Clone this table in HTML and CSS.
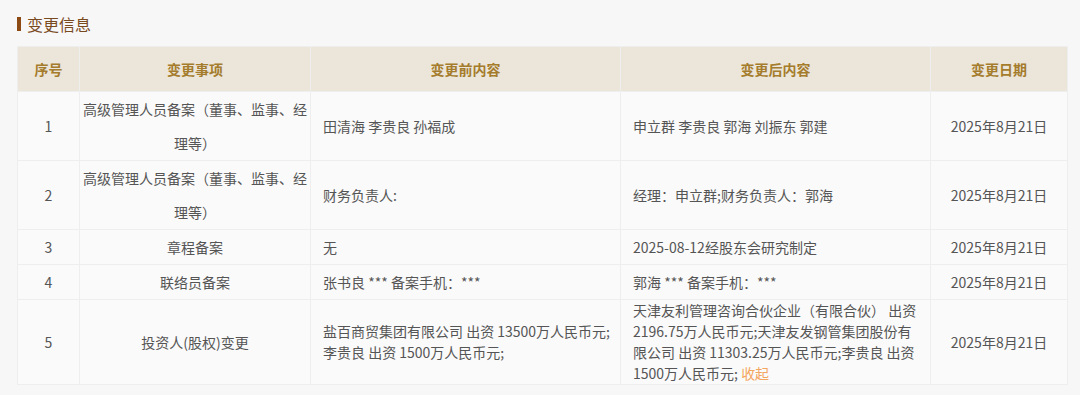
FILE: index.html
```html
<!DOCTYPE html>
<html lang="zh-CN">
<head>
<meta charset="utf-8">
<title>变更信息</title>
<link rel="stylesheet" href="styles.css">
</head>
<body>
<section class="panel">
  <h2 class="title"><span class="bar"></span>变更信息</h2>
  <table class="grid">
    <colgroup>
      <col class="c-no"><col class="c-item"><col class="c-before"><col class="c-after"><col class="c-date">
    </colgroup>
    <thead>
      <tr><th>序号</th><th>变更事项</th><th>变更前内容</th><th>变更后内容</th><th>变更日期</th></tr>
    </thead>
    <tbody>
      <tr>
        <td class="center">1</td>
        <td class="center">高级管理人员备案（董事、监事、经理等）</td>
        <td class="text">田清海 李贵良 孙福成</td>
        <td class="text">申立群 李贵良 郭海 刘振东 郭建</td>
        <td class="center">2025年8月21日</td>
      </tr>
      <tr>
        <td class="center">2</td>
        <td class="center">高级管理人员备案（董事、监事、经理等）</td>
        <td class="text">财务负责人:</td>
        <td class="text">经理：申立群;财务负责人：郭海</td>
        <td class="center">2025年8月21日</td>
      </tr>
      <tr>
        <td class="center">3</td>
        <td class="center">章程备案</td>
        <td class="text">无</td>
        <td class="text">2025-08-12经股东会研究制定</td>
        <td class="center">2025年8月21日</td>
      </tr>
      <tr>
        <td class="center">4</td>
        <td class="center">联络员备案</td>
        <td class="text">张书良 *** 备案手机：***</td>
        <td class="text">郭海 *** 备案手机：***</td>
        <td class="center">2025年8月21日</td>
      </tr>
      <tr>
        <td class="center">5</td>
        <td class="center">投资人(股权)变更</td>
        <td class="text"><div class="multi"><span class="nowrap">盐百商贸集团有限公司 出资 13500万人民币元;</span><br>李贵良 出资 1500万人民币元;</div></td>
        <td class="text"><div class="multi"><span>天津友利管理咨询合伙企业（有限合伙） 出资 2196.75万人民币元;天津友发钢管集团股份有限公司 出资 11303.25万人民币元;李贵良 出资</span> <span>1500万人民币元;</span> <a class="toggle">收起</a></div></td>
        <td class="center">2025年8月21日</td>
      </tr>
    </tbody>
  </table>
</section>
</body>
</html>
```

FILE: styles.css
```css
html, body {
  margin: 0;
  padding: 0;
  background: #f7f7f7;
}

body {
  font-family: "Noto Sans CJK SC", "Microsoft YaHei", "Noto Sans", sans-serif;
  color: #555555;
  font-size: 14px;
}

.panel {
  padding: 12px 13px 0 17px;
}

.title {
  display: flex;
  align-items: center;
  gap: 6px;
  margin: 0;
  height: 24px;
  line-height: 24px;
  font-size: 16px;
  font-weight: normal;
  color: #7a4a1f;
}

.bar {
  display: inline-block;
  width: 4px;
  height: 14px;
  background: #8b4a14;
}

.grid {
  margin-top: 10px;
  width: 1050px;
  border-collapse: collapse;
  table-layout: fixed;
  background: #fafafa;
}

.c-no { width: 62px; }
.c-item { width: 231px; }
.c-before { width: 310px; }
.c-after { width: 310px; }
.c-date { width: 137px; }

.grid th,
.grid td {
  border: 1px solid #eeeeee;
  vertical-align: middle;
}

.grid th {
  height: 44px;
  padding: 0;
  background: #ece5da;
  color: #a47c2c;
  font-weight: bold;
  font-size: 14px;
  text-align: center;
}

.grid td {
  line-height: 34px;
  padding: 0 3px;
}

.grid td.center {
  text-align: center;
}

.grid td.text {
  text-align: left;
  padding: 0 12px;
}

.multi {
  line-height: 21px;
}

.nowrap {
  white-space: nowrap;
}

.toggle {
  color: #f4a55e;
  cursor: pointer;
}
```
